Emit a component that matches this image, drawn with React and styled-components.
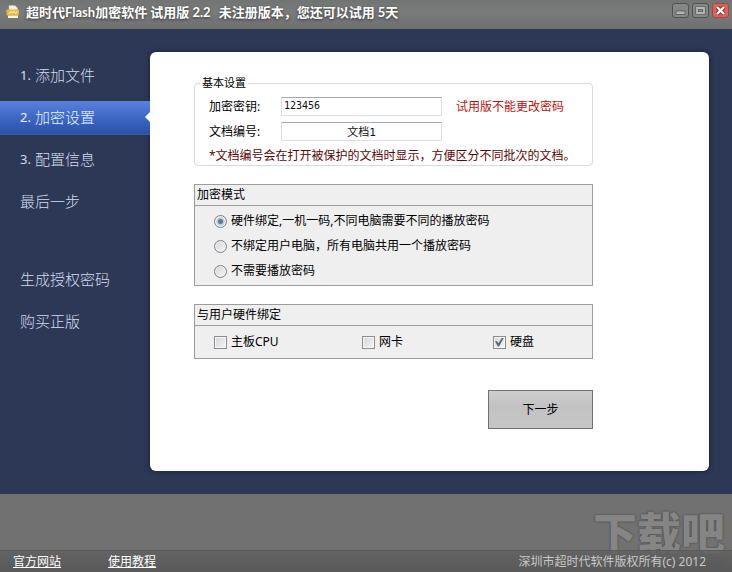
import styled, { createGlobalStyle } from 'styled-components';
import { useState } from 'react';

const steps = ['添加文件', '加密设置', '配置信息'];

const modes = [
    '硬件绑定,一机一码,不同电脑需要不同的播放密码',
    '不绑定用户电脑，所有电脑共用一个播放密码',
    '不需要播放密码',
];

function TitleBar() {
    return (
        <StyledTitleBar>
            <svg width="14" height="14" viewBox="0 0 14 14" aria-hidden="true">
                <path d="M3 .5h6l2.500 2.500v4H3z" fill="#f5f1e6" stroke="#c9b98c" strokeWidth=".6" />
                <path d="M1.500 4.500h10.500q1 0 1 1v4q0 1-1 1H1.500q-1 0-1-1v-4q0-1 1-1z" fill="#e8b93c" />
                <path d="M3 9l2-2.800 1.500 2L8 6.200l1.500 2.300L11.500 6" fill="none" stroke="#fff4cc" />
                <path d="M2 10.500h10v2.500H2z" fill="#f7f3ea" />
            </svg>
            <StyledTitle>
                <span>超时代Flash加密软件 试用版 2.2</span>
                <span>未注册版本，您还可以试用 5天</span>
            </StyledTitle>
            <StyledWindowButton aria-label="最小化">
                <svg width="15" height="13" viewBox="0 0 15 13">
                    <path d="M3 7h9v3.500H3z" fill="#b4b6b5" stroke="#545655" strokeWidth=".8" />
                </svg>
            </StyledWindowButton>
            <StyledWindowButton aria-label="最大化">
                <svg width="15" height="13" viewBox="0 0 15 13">
                    <path d="M4 4h7v5H4z" fill="none" stroke="#545655" strokeWidth="3.200" />
                    <path d="M4 4h7v5H4z" fill="none" stroke="#b4b6b5" strokeWidth="1.800" />
                </svg>
            </StyledWindowButton>
            <StyledWindowButton aria-label="关闭" $danger>
                <svg width="15" height="13" viewBox="0 0 15 13">
                    <path d="M4 3l7 7M11 3l-7 7" stroke="#8a2420" strokeWidth="4" />
                    <path d="M4 3l7 7M11 3l-7 7" stroke="#fff" strokeWidth="2.400" />
                </svg>
            </StyledWindowButton>
        </StyledTitleBar>
    );
}

function App() {

    const [step, setStep] = useState(1);
    const [mode, setMode] = useState(0);

    return (
        <>
            <GlobalStyle />
            <StyledWindow>
                <TitleBar />

                <StyledBody>
                    <StyledSidebar>
                        <StyledMenu>
                            {steps.map((name, i) => (
                                <StyledMenuItem key={name} $active={step === i} onClick={() => setStep(i)}>
                                    <StyledNumber>{i + 1}.</StyledNumber>{name}
                                </StyledMenuItem>
                            ))}
                            <StyledMenuItem $active={step === 3} onClick={() => setStep(3)}>最后一步</StyledMenuItem>
                        </StyledMenu>
                        <StyledMenu>
                            <StyledMenuItem>生成授权密码</StyledMenuItem>
                            <StyledMenuItem>购买正版</StyledMenuItem>
                        </StyledMenu>
                    </StyledSidebar>

                    <StyledPanel>
                        <StyledForm onSubmit={(e) => e.preventDefault()}>
                            <StyledBasic>
                                <legend>基本设置</legend>
                                <StyledField>
                                    <label htmlFor="key">加密密钥:</label>
                                    <StyledInput id="key" defaultValue="123456" />
                                    <StyledWarning>试用版不能更改密码</StyledWarning>
                                </StyledField>
                                <StyledField>
                                    <label htmlFor="doc">文档编号:</label>
                                    <StyledInput id="doc" defaultValue="文档1" $center />
                                </StyledField>
                                <StyledNote>*文档编号会在打开被保护的文档时显示，方便区分不同批次的文档。</StyledNote>
                            </StyledBasic>

                            <StyledGroup role="radiogroup" aria-labelledby="mode-title">
                                <StyledGroupTitle id="mode-title">加密模式</StyledGroupTitle>
                                <StyledModes>
                                    {modes.map((text, i) => (
                                        <StyledOption key={text}>
                                            <StyledRadio name="mode" checked={mode === i} onChange={() => setMode(i)} />
                                            {text}
                                        </StyledOption>
                                    ))}
                                </StyledModes>
                            </StyledGroup>

                            <StyledGroup role="group" aria-labelledby="hardware-title">
                                <StyledGroupTitle id="hardware-title">与用户硬件绑定</StyledGroupTitle>
                                <StyledHardware>
                                    <StyledOption><StyledCheckbox />主板CPU</StyledOption>
                                    <StyledOption><StyledCheckbox />网卡</StyledOption>
                                    <StyledOption><StyledCheckbox defaultChecked />硬盘</StyledOption>
                                </StyledHardware>
                            </StyledGroup>

                            <StyledNext type="submit">下一步</StyledNext>
                        </StyledForm>
                    </StyledPanel>
                </StyledBody>

                <StyledBottom>
                    <StyledWatermark aria-hidden="true">
                        下载吧
                        <small>.com</small>
                    </StyledWatermark>
                    <StyledFooter>
                        <a href="#site">官方网站</a>
                        <a href="#help">使用教程</a>
                        <StyledCopyright>深圳市超时代软件版权所有(c) 2012</StyledCopyright>
                    </StyledFooter>
                </StyledBottom>
            </StyledWindow>
        </>
    );
}

export default App;

const GlobalStyle = createGlobalStyle`
    * {
        box-sizing: border-box;
    }
    body {
        margin: 0;
        font-family: "Noto Sans", "Noto Sans CJK SC", sans-serif;
        font-size: 12px;
        line-height: 16px;
        color: #000;
    }
    button, input {
        font: inherit;
        margin: 0;
    }
`;

const StyledWindow = styled.div`
    min-height: 100vh;
    display: flex;
    flex-direction: column;
    background: #2d3856;
`;

const StyledTitleBar = styled.header`
    height: 29px;
    display: flex;
    align-items: flex-start;
    gap: 3px;
    padding: 3px 3px 0 6px;
    background: linear-gradient(#727473, #7a7c7b 40%, #6d706e);
    > svg {
        margin-top: 2px;
    }
`;

const StyledTitle = styled.h1`
    flex: 1;
    display: flex;
    gap: 8px;
    margin: 0;
    padding-left: 3px;
    font-family: Lato, "Noto Sans CJK SC", sans-serif;
    font-size: 13px;
    font-weight: 700;
    line-height: 18px;
    white-space: nowrap;
    color: #fff;
    text-shadow: 0 1px 3px #333;
`;

const StyledWindowButton = styled.button`
    width: 17px;
    height: 15px;
    display: flex;
    padding: 0;
    border: 1px solid ${props => props.$danger ? '#a34743' : '#4f5150'};
    border-radius: 3px;
    background: ${props => props.$danger ? '#d9625e' : '#858786'};
`;

const StyledBody = styled.div`
    flex: 1;
    display: flex;
    padding: 23px 23px 23px 0;
    background: #2d3856;
`;

const StyledSidebar = styled.nav`
    width: 150px;
    flex-shrink: 0;
    display: flex;
    flex-direction: column;
    gap: 44px;
    padding-top: 7px;
`;

const StyledMenu = styled.div`
    display: flex;
    flex-direction: column;
    gap: 8px;
`;

const StyledMenuItem = styled.button`
    position: relative;
    height: 34px;
    display: flex;
    align-items: center;
    padding: 0 0 2px 20px;
    border: 0;
    background: ${props => props.$active ? 'linear-gradient(#5b82dc, #3f69c6 45%, #2b52aa 95%, #3c5f9c)' : 'transparent'};
    color: ${props => props.$active ? '#e8f6ff' : '#d3dcec'};
    font-size: 15px;
    font-weight: 300;
    text-align: left;
    cursor: pointer;
    &::after {
        content: '';
        display: ${props => props.$active ? 'block' : 'none'};
        position: absolute;
        right: 0;
        top: 11px;
        border: 5px solid transparent;
        border-right-color: #fff;
        border-left-width: 0;
    }
`;

const StyledNumber = styled.span`
    width: 15px;
    font-size: 13px;
    font-weight: 400;
`;

const StyledPanel = styled.main`
    flex: 1;
    padding: 24px 44px 42px;
    border-radius: 6px;
    background: #fff;
    box-shadow: 0 0 4px 1px #1d2437;
`;

const StyledForm = styled.form`
    max-width: 399px;
    display: flex;
    flex-direction: column;
    gap: 18px;
`;

const StyledBasic = styled.fieldset`
    min-width: 0;
    margin: 0;
    padding: 7px 14px 0;
    border: 1px solid #d5dbdf;
    border-radius: 4px;
    > legend {
        margin-left: -9px;
        padding: 0 2px;
        font-size: 11px;
        line-height: 14px;
    }
`;

const StyledField = styled.div`
    height: 19px;
    display: flex;
    align-items: center;
    margin-bottom: 6px;
    > label {
        width: 72px;
    }
`;

const StyledInput = styled.input.attrs({ type: 'text' })`
    width: 161px;
    height: 19px;
    padding: 0 2px 2px;
    border: 1px solid #dcdfe5;
    border-top-color: #a5a8ae;
    border-radius: 0;
    background: #fff;
    font-family: "DejaVu Sans Mono", "Noto Sans CJK SC", monospace;
    font-size: ${props => props.$center ? '11px' : '10px'};
    text-align: ${props => props.$center ? 'center' : 'left'};
    color: #111;
`;

const StyledWarning = styled.span`
    margin-left: 14px;
    color: #b8140c;
`;

const StyledNote = styled.p`
    margin: 0;
    line-height: 18px;
    white-space: nowrap;
    color: #5c0505;
`;

const StyledGroup = styled.section`
    border: 1px solid #9c9c9c;
    background: #efefef;
`;

const StyledGroupTitle = styled.h2`
    margin: 0;
    padding: 0 2px;
    border-bottom: 1px solid #9c9c9c;
    font-size: 12px;
    font-weight: 400;
    line-height: 20px;
`;

const StyledModes = styled.div`
    display: flex;
    flex-direction: column;
    gap: 9px;
    padding: 7px 19px 6px;
`;

const StyledHardware = styled.div`
    display: grid;
    grid-template-columns: 148fr 131fr 80fr;
    padding: 8px 19px;
`;

const StyledOption = styled.label`
    display: flex;
    align-items: center;
    gap: 4px;
    white-space: nowrap;
`;

const StyledRadio = styled.input.attrs({ type: 'radio' })`
    appearance: none;
    width: 13px;
    height: 13px;
    border: 1px solid #7e8083;
    border-radius: 50%;
    background: ${props => props.checked
        ? 'radial-gradient(circle, #5f7896 0 2px, #b9c8d8 3px, #dfe5ec 5px)'
        : 'linear-gradient(135deg, #d3d5d8, #f6f6f6)'};
    box-shadow: inset 0 0 0 1px #f2f2f2;
`;

const StyledCheckbox = styled.input.attrs({ type: 'checkbox' })`
    appearance: none;
    width: 13px;
    height: 13px;
    display: grid;
    place-items: center;
    border: 1px solid #8a8c8e;
    background: linear-gradient(135deg, #d3d5d8, #f6f6f6);
    box-shadow: inset 0 0 0 1px #f7f7f7;
    &:checked::after {
        content: '';
        width: 9px;
        height: 9px;
        background: #62676d;
        clip-path: polygon(0 45%, 20% 40%, 38% 65%, 80% 0, 100% 0, 45% 100%, 32% 100%);
    }
`;

const StyledNext = styled.button`
    align-self: flex-end;
    width: 105px;
    height: 39px;
    margin-top: 13px;
    border: 1px solid #707070;
    background: linear-gradient(#cecece, #c2c2c2 40%, #c6c6c6);
    color: #000;
`;

const StyledBottom = styled.div`
    position: relative;
    padding-top: 56px;
    background: #717171;
`;

const StyledWatermark = styled.div`
    position: absolute;
    right: 7px;
    bottom: 13px;
    font-size: 44px;
    font-weight: 900;
    line-height: 52px;
    color: #858585;
    text-shadow: 0 0 2px #444, 0 0 1px #555;
    > small {
        position: absolute;
        right: 0;
        bottom: -9px;
        font-size: 11px;
        font-weight: 400;
        line-height: 14px;
    }
`;

const StyledFooter = styled.footer`
    position: relative;
    height: 22px;
    display: flex;
    align-items: center;
    gap: 47px;
    padding: 0 26px 0 13px;
    border-top: 1px solid #5a5a5a;
    background: linear-gradient(rgba(96, 96, 96, 0.8), rgba(82, 82, 82, 0.8));
    > a {
        color: #fff;
    }
`;

const StyledCopyright = styled.span`
    margin-left: auto;
    color: #c8c8c8;
`;
